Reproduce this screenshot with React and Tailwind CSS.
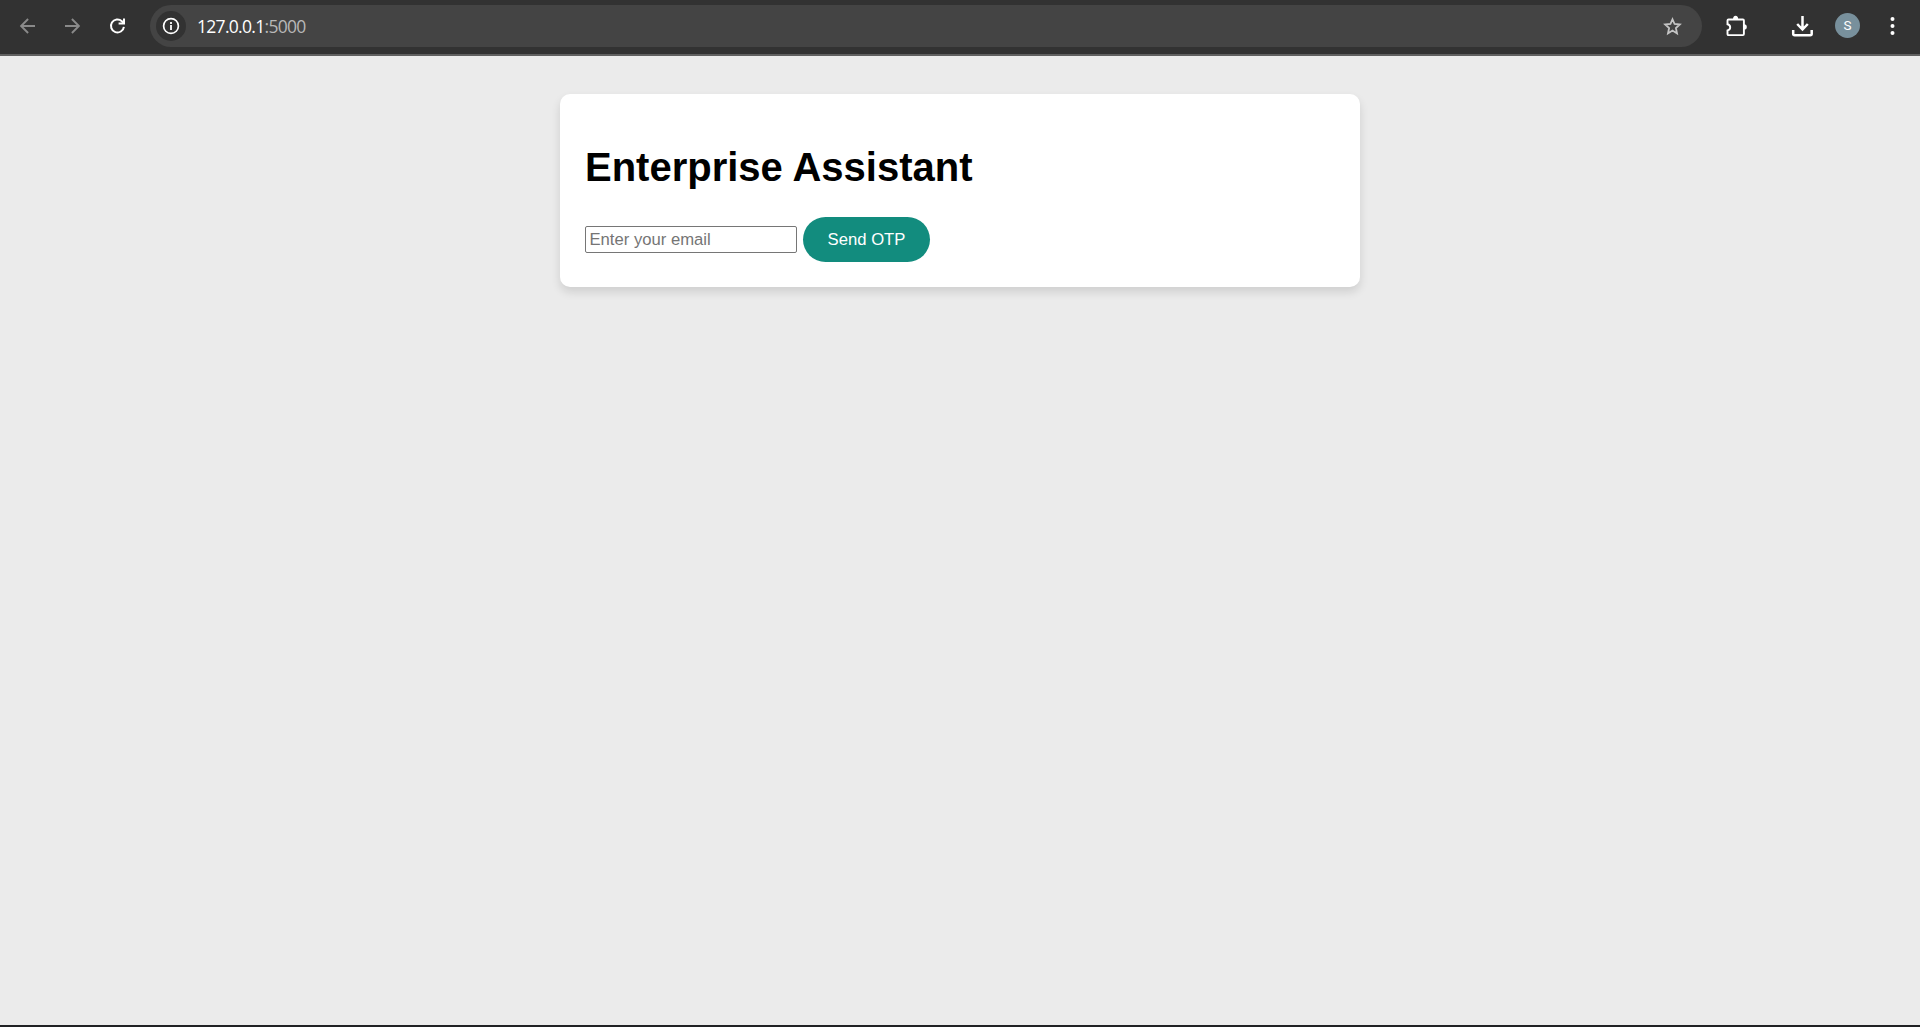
function BackIcon() {
  return (
    <svg className="h-5 w-5 text-[#8a8a8a]" viewBox="0 0 20 20" fill="none" stroke="currentColor" strokeWidth="1.9">
      <path d="M17 10H3.4M10.1 3L3.1 10L10.1 17" />
    </svg>
  );
}

function ForwardIcon() {
  return (
    <svg className="h-5 w-5 text-[#8a8a8a]" viewBox="0 0 20 20" fill="none" stroke="currentColor" strokeWidth="1.9">
      <path d="M2 10H15.6M8.9 3L15.9 10L8.9 17" />
    </svg>
  );
}

function ReloadIcon() {
  return (
    <svg className="h-5 w-5 text-white" viewBox="0 0 20 20" fill="none" stroke="currentColor" strokeWidth="2">
      <path d="M15.9 10.8A6.5 6.5 0 1 1 13.9 5.2L15.6 7.4" />
      <path d="M16 2.5V7.6H10.6" />
    </svg>
  );
}

function InfoIcon() {
  return (
    <svg className="h-[18px] w-[18px] text-white" viewBox="0 0 18 18" fill="none" stroke="currentColor">
      <circle cx="9" cy="9" r="7.4" strokeWidth="1.7" />
      <path d="M9 8V13M9 5V6.9" strokeWidth="1.8" />
    </svg>
  );
}

function StarIcon() {
  return (
    <svg className="h-5 w-5 text-[#c4c4c4]" viewBox="0 0 20 20" fill="none" stroke="currentColor" strokeWidth="1.8">
      <path d="M10.5 3.3L12.6 8L17.8 8.5L13.9 12L15 17.4L10.5 14.6L6 17.4L7.1 12L3.2 8.5L8.4 8Z" />
    </svg>
  );
}

function PuzzleIcon() {
  return (
    <svg className="h-[22px] w-[22px] text-white" viewBox="0 0 22 22" fill="none">
      <path
        d="M2.5 4.5H16.9Q17.9 4.5 17.9 5.5V19.1Q17.9 20.1 16.9 20.1H2.5Q1.5 20.1 1.5 19.1V15.4Q4.2 14.8 4.2 12.3Q4.2 9.8 1.5 9.2V5.5Q1.5 4.5 2.5 4.5Z"
        stroke="currentColor"
        strokeWidth="1.9"
      />
      <path d="M7 4.4A2.6 3.6 0 0 1 12.2 4.4ZM18 9.3A2.8 2.6 0 0 1 18 14.5Z" fill="currentColor" />
    </svg>
  );
}

function DownloadIcon() {
  return (
    <svg className="mt-px h-[22px] w-[22px] text-white" viewBox="0 0 22 22" fill="none" stroke="currentColor" strokeWidth="2.5">
      <path d="M11.5 1V14.6M6.2 9L11.5 14.5L16.8 9" />
      <path d="M2.2 15V18.7Q2.2 20.2 3.7 20.2H19.2Q20.7 20.2 20.7 18.7V15" />
    </svg>
  );
}

function MenuIcon() {
  return (
    <svg className="h-5 w-5 text-white" viewBox="0 0 20 20" fill="currentColor">
      <circle cx="10.5" cy="3.1" r="2" />
      <circle cx="10.5" cy="10" r="2" />
      <circle cx="10.5" cy="16.9" r="2" />
    </svg>
  );
}

function BrowserBar() {
  return (
    <header className="flex h-14 shrink-0 items-start border-b-2 border-[#606060] bg-[#323232] pt-[5px]">
      <div className="flex h-[41px] w-[150px] items-center gap-[25px] pl-[18px]">
        <BackIcon />
        <ForwardIcon />
        <ReloadIcon />
      </div>
      <div className="flex h-[42px] w-[1552px] items-center rounded-full bg-[#444444] pl-1.5">
        <span className="flex h-[30px] w-[30px] items-center justify-center rounded-full bg-[#323232]">
          <InfoIcon />
        </span>
        <span className="ml-[11px] flex-1 pt-px font-['Open_Sans',sans-serif] text-[17.5px] tracking-[-0.7px] whitespace-nowrap text-[#b8b8b8]">
          <span className="text-white">127.0.0.1</span>:5000
        </span>
        <span className="mr-5">
          <StarIcon />
        </span>
      </div>
      <div className="flex h-[41px] items-center pl-6">
        <PuzzleIcon />
        <span className="ml-[43px]">
          <DownloadIcon />
        </span>
        <span className="ml-[22px] flex h-[25px] w-[25px] items-center justify-center rounded-full bg-[#78909c] font-['Roboto',sans-serif] text-[13.5px] text-white">
          S
        </span>
        <span className="ml-[22px]">
          <MenuIcon />
        </span>
      </div>
    </header>
  );
}

export default function App() {
  return (
    <div className="flex h-[1027px] w-[1920px] flex-col overflow-hidden border-b-2 border-[#202124] bg-[#ebebeb] font-['Liberation_Sans',sans-serif]">
      <BrowserBar />
      <main className="flex justify-center pt-[38px]">
        <section className="h-[193px] w-[800px] rounded-[10px] bg-white px-[25px] pt-[50px] shadow-[0_5px_10px_rgba(0,0,0,0.12)]">
          <h1 className="text-[40px] leading-[46px] font-bold text-black">Enterprise Assistant</h1>
          <form className="mt-[27px] flex items-center gap-[6px]" onSubmit={(e) => e.preventDefault()}>
            <input
              type="email"
              placeholder="Enter your email"
              className="h-[27px] w-[212px] rounded-[2px] border border-[#767676] bg-white px-[3.5px] text-[16.67px] text-black placeholder:text-[#757575]"
            />
            <button className="h-[45px] w-[127px] rounded-[25px] bg-[#128c7e] text-[16.67px] text-white">Send OTP</button>
          </form>
        </section>
      </main>
    </div>
  );
}
